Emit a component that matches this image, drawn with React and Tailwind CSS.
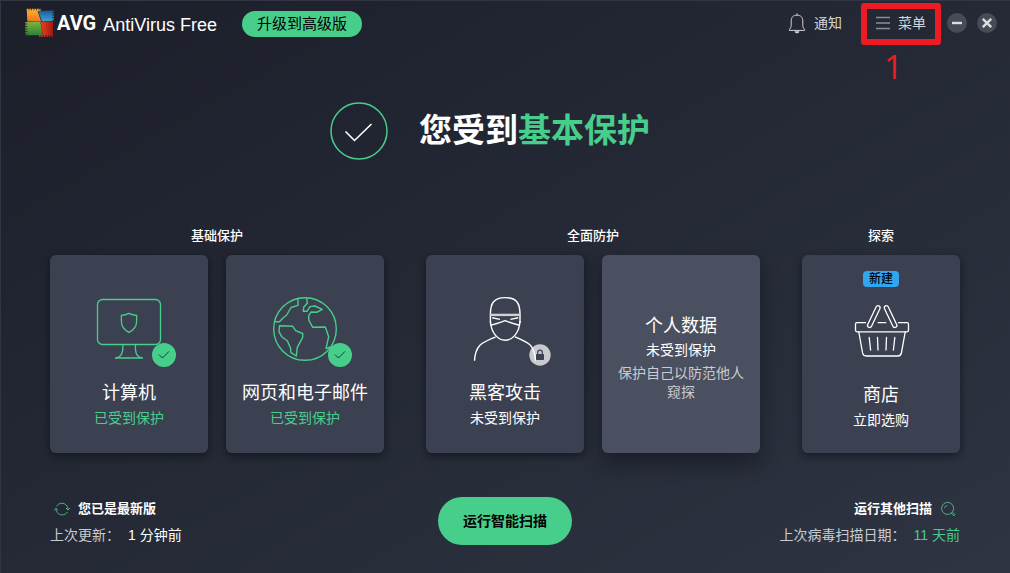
import React from 'react';

const CheckBadge = () => (
    <>
        <circle cx="83" cy="59" r="12" fill="#48ce8b" />
        <path d="M78 58.6 L81.4 62 L88 55.4" stroke="#1c3a35" strokeWidth="1" fill="none" />
    </>
);

const ComputerIcon = () => (
    <svg viewBox="0 0 96 72" className="w-24 h-[72px]" fill="none" stroke="#48ce8b" strokeWidth="1.3" aria-hidden="true">
        <rect x="16.5" y="3.5" width="63" height="45" rx="5" />
        <path d="M48 17.4 C45.5 18.6 43 19.2 40.4 19.4 V25.5 C40.4 30.5 43.5 34 48 36.4 C52.5 34 55.6 30.5 55.6 25.5 V19.4 C53 19.2 50.5 18.6 48 17.4 Z" />
        <path d="M42 48.5 C42.2 55 41 60 37 61.5 L34 62 H62 L59 61.5 C55 60 54 55 54.4 48.5" />
        <g stroke="none"><CheckBadge /></g>
    </svg>
);

const GlobeIcon = () => (
    <svg viewBox="0 0 96 72" className="w-24 h-[72px]" fill="none" stroke="#48ce8b" strokeWidth="1.4" strokeLinejoin="round" aria-hidden="true">
        <circle cx="48" cy="33" r="31.3" />
        <path d="M17.6 25.8 H22.3 L26.3 21.7 L29.7 19 L34 11.5 L41 9.3 V2.6" />
        <path d="M49.7 2 L50.3 7.3 L46.7 11.3 L46.3 15.3 H50 L53 10.6 L58 10 L65.3 13.3 L59.7 16.3 L54 16 L51.7 19.7 V24 L55.7 31.3 L68.3 31 L71.7 40.7 L69 52.6 L73 51" />
        <path d="M22.5 29.8 L35.7 30.3 L38.7 34.7 L45.7 37.5 V41.3 L40.3 51.3 L39.3 60 L34 56.7 L33.5 52 L30.3 44.7 L24.7 40.7 L22 35.7 Z" />
        <g stroke="none"><CheckBadge /></g>
    </svg>
);

const HackerIcon = () => (
    <svg viewBox="0 0 96 72" className="w-24 h-[72px]" fill="none" stroke="#ffffff" strokeWidth="1.4" aria-hidden="true">
        <path d="M33.4 27 V18 C33.4 7 37 1.6 48.2 1.6 C59.4 1.6 63 7 63 18 V27" />
        <path d="M33 18.9 H63.4" stroke="#d0d1d6" strokeWidth="2.4" />
        <path d="M33.4 25 C34 37 41 44.2 48.2 44.2 C55.4 44.2 62.4 37 63 25" />
        <path d="M35.2 21.8 L43 23.4 M61.2 21.8 L53.4 23.4" />
        <path d="M33.6 29 C38.5 28.5 43.5 26.4 48.2 24.6 C52.9 26.4 58 28.5 62.8 29" />
        <path d="M38.6 40.8 C33.5 43.2 27 45.6 23.2 49 C19.2 53 17.8 58.5 17.5 64.8 M57.8 40.8 C63 43.2 69.4 45.6 73.2 49" />
        <circle cx="83" cy="59" r="10.7" fill="#c9cacf" stroke="none" />
        <path d="M73.2 49 C77 53 78.2 58.5 78.5 64.8" />
        <rect x="79" y="58" width="8" height="6" rx="0.8" fill="#3c4152" stroke="none" />
        <path d="M80.7 58.5 V56.6 C80.7 53.4 85.3 53.4 85.3 56.6 V58.5" stroke="#3c4152" strokeWidth="1.2" />
    </svg>
);

const BasketIcon = () => (
    <svg viewBox="0 0 96 74" className="w-24 h-[74px]" fill="none" stroke="#ffffff" strokeWidth="1.3" strokeLinecap="round" aria-hidden="true">
        <path d="M32.5 26.7 H24 Q22.5 26.7 22.5 28.2 V34 Q22.5 35.8 24 35.8 H74 Q75.5 35.8 75.5 34 V28.2 Q75.5 26.7 74 26.7 H65.5 M45.2 26.7 H52.8" />
        <path d="M25.8 36 L29.6 57 Q30.2 60 33.2 60 H64.8 Q67.8 60 68.4 57 L72.2 36" />
        <path d="M36.2 41.5 L37.6 54 M44.5 41.5 L45 54 M53.5 41.5 L53 54 M61.8 41.5 L60.4 54" />
        <rect x="38.7" y="8.8" width="4.2" height="23.6" rx="2.1" transform="rotate(25.5 40.8 20.6)" />
        <rect x="55.5" y="8.8" width="4.2" height="23.6" rx="2.1" transform="rotate(-25.5 57.6 20.6)" />
    </svg>
);

const Logo = () => (
    <svg viewBox="0 0 30 30" className="w-[30px] h-[30px]" aria-hidden="true">
        <defs>
            <linearGradient id="orange" x1="0" y1="0" x2="0" y2="1">
                <stop offset="0" stopColor="#fbb52c" />
                <stop offset="1" stopColor="#ee7423" />
            </linearGradient>
            <linearGradient id="blue" x1="0" y1="0" x2="0" y2="1">
                <stop offset="0" stopColor="#145f9c" />
                <stop offset="1" stopColor="#3fa3d6" />
            </linearGradient>
            <linearGradient id="green" x1="0" y1="0" x2="0" y2="1">
                <stop offset="0" stopColor="#7db33d" />
                <stop offset="1" stopColor="#2e7f35" />
            </linearGradient>
            <linearGradient id="red" x1="0" y1="0" x2="1" y2="0">
                <stop offset="0" stopColor="#f04a23" />
                <stop offset="1" stopColor="#a3170f" />
            </linearGradient>
        </defs>
        <path d="M1.7 0.8 H15.5 V3 L12.6 3.2 L16.3 13.7 L2.3 13.5 Z" fill="url(#orange)" />
        <path d="M13 3 L28.8 2.6 V12.8 L17 13.6 Z" fill="url(#blue)" />
        <path d="M0.3 14 H15.4 L17.7 27.3 H0.3 Z" fill="url(#green)" />
        <path d="M15.8 14 L28 13.2 V28.8 H14 V27.4 L17.9 27.2 Z" fill="url(#red)" />
        <g stroke="#1e212c" strokeWidth="0.8">
            <path d="M4 0 V2.4 M6.5 0 V2.4 M9 0 V2.4 M11.5 0 V2.4 M14 0 V2.4" />
            <path d="M27 4.5 H30 M27 7 H30 M27 9.5 H30 M27 12 H30" />
            <path d="M0 16 H2.4 M0 18.5 H2.4 M0 21 H2.4 M0 23.5 H2.4 M0 26 H2.4" />
            <path d="M16 27.6 V30 M18.5 27 V30 M21 27 V30 M23.5 27 V30 M26 27 V30" />
        </g>
    </svg>
);

const BellIcon = () => (
    <svg viewBox="0 0 18 22" className="w-[18px] h-[22px]" fill="none" stroke="#d3d4d7" strokeWidth="1" aria-hidden="true">
        <path d="M9 3.2 C5 3.2 3.2 5.6 3.2 9 V13.4 C3.2 15.6 2.2 16.4 1.4 17.4 V18.4 H16.6 V17.4 C15.8 16.4 14.8 15.6 14.8 13.4 V9 C14.8 5.6 13 3.2 9 3.2 Z" />
        <path d="M9 1.4 V3.2" />
        <path d="M7 19.8 H11 C10.8 21.2 7.2 21.2 7 19.8 Z" fill="#d3d4d7" />
    </svg>
);

const RefreshIcon = () => (
    <svg viewBox="0 0 16 16" className="w-4 h-4" fill="none" stroke="#41b980" strokeWidth="1" aria-hidden="true">
        <path d="M2.6 5.4 C4.6 1.6 10.4 1 13 5 C13.6 6 14 7 14 8.6 M12 7 L14 9 L15.8 7" />
        <path d="M13.4 11 C11.4 14.6 5.6 15 3 11.2 C2.3 10.2 2 9 2 7.6 M0.2 9.2 L2 7.4 L4 9.2" />
    </svg>
);

const ScanIcon = () => (
    <svg viewBox="0 0 16 16" className="w-4 h-4" fill="none" stroke="#41b980" strokeWidth="1" aria-hidden="true">
        <circle cx="7.6" cy="7.4" r="6" />
        <path d="M4.6 7.2 C4.6 5.6 5.8 4.6 7.4 4.6" />
        <path d="M11.6 12 L12.4 11.2 L15 13.6 L14 14.8 L11.4 12.4" />
    </svg>
);

const cardGroups = [
    {
        label: '基础保护',
        cards: [
            { icon: <ComputerIcon />, title: '计算机', status: '已受到保护', safe: true },
            { icon: <GlobeIcon />, title: '网页和电子邮件', status: '已受到保护', safe: true },
        ],
    },
    {
        label: '全面防护',
        cards: [
            { icon: <HackerIcon />, title: '黑客攻击', status: '未受到保护' },
            { title: '个人数据', status: '未受到保护', detail: '保护自己以防范他人窥探', active: true },
        ],
    },
    {
        label: '探索',
        cards: [{ icon: <BasketIcon />, title: '商店', status: '立即选购', badge: '新建' }],
    },
];

const Card = ({ icon, title, status, safe, detail, active, badge }) => (
    <button
        type="button"
        className={`min-h-[198px] flex flex-col items-center rounded-md ${
            active
                ? 'bg-[#4b5060] justify-center px-4 shadow-[0_10px_20px_rgba(10,12,20,0.45)]'
                : 'bg-[#3c4152] shadow-[0_3px_8px_rgba(10,12,20,0.6)]'
        } ${badge ? 'pt-4' : active ? '' : 'pt-[41px]'}`}
    >
        {badge && (
            <span className="mb-[9px] px-1.5 h-4 leading-4 rounded bg-[#31a6ee] text-black text-xs font-medium">{badge}</span>
        )}
        {icon}
        <span className={`text-lg leading-6 text-white ${icon ? 'mt-[13px]' : 'mt-2'}`}>{title}</span>
        <span className={`text-sm leading-5 ${icon ? 'mt-[3px]' : 'mt-0.5'} ${safe ? 'text-[#48ce8b]' : 'text-white'}`}>{status}</span>
        {detail && <span className="mt-1 text-sm leading-[19px] text-[#c9cbd0]">{detail}</span>}
    </button>
);

const Header = () => (
    <header className="flex items-center h-[46px] pl-[25px] pr-[13px] text-sm text-[#d3d4d7]">
        <Logo />
        <span className="ml-[2px] font-['Roboto',sans-serif] text-xl leading-6 font-bold text-white">AVG</span>
        <h1 className="ml-[7px] pt-[3px] font-['Liberation_Sans',sans-serif] text-lg text-white">AntiVirus Free</h1>
        <button type="button" className="ml-[25px] mt-[2px] h-[26px] px-[15px] rounded-full bg-[#48ce8b] text-[15px] leading-[26px] text-black">
            升级到高级版
        </button>
        <div className="ml-auto flex items-center">
            <button type="button" className="flex items-center gap-2">
                <BellIcon />
                通知
            </button>
            <div className="relative ml-[34px] mr-[21px]">
                <button type="button" className="flex items-center gap-2">
                    <svg viewBox="0 0 14 14" className="w-3.5 h-3.5" stroke="#8b8e96" strokeWidth="1.4" aria-hidden="true">
                        <path d="M0 1.5 H14 M0 7 H14 M0 12.5 H14" />
                    </svg>
                    菜单
                </button>
                <div className="absolute -inset-x-[15px] -top-[10px] -bottom-[12px] border-[6px] border-[#ed1c24] rounded-[3px] pointer-events-none" />
                <span className="absolute top-[38px] left-2 font-['Open_Sans',sans-serif] text-[33px] leading-8 text-[#ed1c24]">1</span>
            </div>
            <button type="button" aria-label="最小化" className="w-5 h-5 rounded-full bg-[#474b56]">
                <svg viewBox="0 0 20 20" stroke="#dcdde0" strokeWidth="2.4" aria-hidden="true">
                    <path d="M5 10 H15" />
                </svg>
            </button>
            <button type="button" aria-label="关闭" className="ml-2.5 w-5 h-5 rounded-full bg-[#474b56]">
                <svg viewBox="0 0 20 20" stroke="#dcdde0" strokeWidth="2.4" aria-hidden="true">
                    <path d="M5.8 5.8 L14.2 14.2 M14.2 5.8 L5.8 14.2" />
                </svg>
            </button>
        </div>
    </header>
);

const Footer = () => (
    <footer className="mt-11 grid grid-cols-[1fr_auto_1fr] text-sm leading-5 text-[#c9cbd0]">
        <div className="pt-[2px]">
            <button type="button" className="flex items-center gap-2 ml-1 text-[13px] leading-5 font-bold text-white">
                <RefreshIcon />
                您已是最新版
            </button>
            <p className="mt-[6px] flex gap-2">
                上次更新：<span className="text-white">1 分钟前</span>
            </p>
        </div>
        <button type="button" className="h-12 px-[25px] rounded-full bg-[#48ce8b] text-sm font-bold text-black">
            运行智能扫描
        </button>
        <div className="pt-[2px] flex flex-col items-end">
            <button type="button" className="flex items-center gap-2 mr-1 text-[13px] leading-5 font-bold text-white">
                运行其他扫描
                <ScanIcon />
            </button>
            <p className="mt-[6px] flex gap-2">
                上次病毒扫描日期：<span className="text-[#48ce8b]">11 天前</span>
            </p>
        </div>
    </footer>
);

const App = () => (
    <div
        lang="zh-CN"
        className="min-h-screen bg-gradient-to-br from-[#1c1f2a] to-[#2e3442] font-['Liberation_Sans','Noto_Sans_CJK_SC',sans-serif] shadow-[inset_1px_1px_0_#303541]"
    >
        <Header />
        <main className="px-[50px]">
            <section className="mt-14 flex justify-center items-center gap-[31px] pr-[30px]">
                <svg viewBox="0 0 58 58" className="w-[58px] h-[58px]" fill="none" aria-hidden="true">
                    <circle cx="29" cy="29" r="28" stroke="#48ce8b" strokeWidth="1.5" />
                    <path d="M15.5 29.5 L24.5 38.5 L41.5 22" stroke="#ffffff" strokeWidth="1.6" />
                </svg>
                <h2 className="text-[33px] leading-[50px] font-bold text-white">
                    您受到<span className="text-[#48ce8b]">基本保护</span>
                </h2>
            </section>
            <div className="mt-[66px] grid grid-cols-[334fr_334fr_158fr] gap-[42px]">
                {cardGroups.map((group) => (
                    <section key={group.label}>
                        <h3 className="text-center text-[13px] leading-5 font-medium text-white">{group.label}</h3>
                        <div className="mt-[9px] grid grid-flow-col auto-cols-fr gap-[18px]">
                            {group.cards.map((card) => (
                                <Card key={card.title} {...card} />
                            ))}
                        </div>
                    </section>
                ))}
            </div>
            <Footer />
        </main>
    </div>
);

export default App;
